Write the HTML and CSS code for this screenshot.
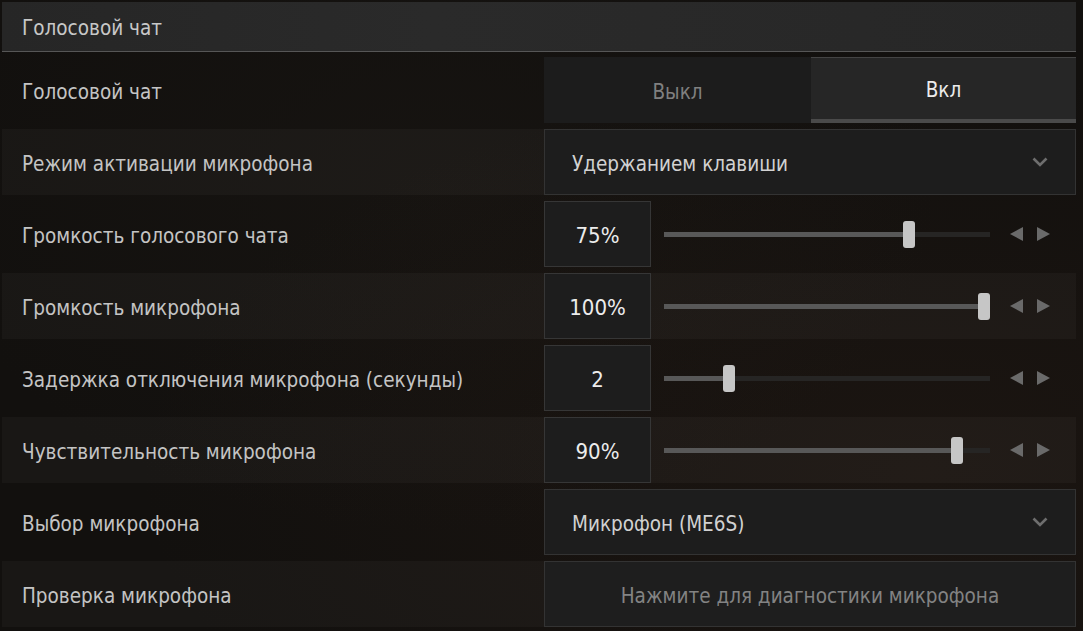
FILE: index.html
```html
<!DOCTYPE html>
<html lang="ru">
<head>
    <meta charset="UTF-8">
    <meta name="viewport" content="width=device-width, initial-scale=1.0">
    <title>Голосовой чат</title>
    <link rel="stylesheet" href="styles.css">
</head>
<body>

    <div class="panel">
        <div class="panel-head">Голосовой чат</div>

        <div class="rows">
            <div class="row">
                <div class="label">Голосовой чат</div>
                <div class="control toggle">
                    <div class="opt">Выкл</div>
                    <div class="opt active">Вкл</div>
                </div>
            </div>

            <div class="row alt">
                <div class="label">Режим активации микрофона</div>
                <div class="control select">
                    <span>Удержанием клавиши</span>
                    <svg class="chevron" width="16" height="10" viewBox="0 0 16 10"><path d="M1.5 1.5 L8 8 L14.5 1.5" fill="none" stroke="#6e6e6e" stroke-width="2.6"/></svg>
                </div>
            </div>

            <div class="row">
                <div class="label">Громкость голосового чата</div>
                <div class="control range">
                    <div class="value">75%</div>
                    <div class="track">
                        <div class="fill" style="width: 75%"></div>
                        <div class="thumb" style="left: 75%"></div>
                    </div>
                    <div class="arrows">
                        <svg width="13" height="14" viewBox="0 0 13 14"><polygon points="13,0 13,14 0,7" fill="#6a6a6a"/></svg>
                        <svg width="13" height="14" viewBox="0 0 13 14"><polygon points="0,0 0,14 13,7" fill="#6a6a6a"/></svg>
                    </div>
                </div>
            </div>

            <div class="row alt">
                <div class="label">Громкость микрофона</div>
                <div class="control range">
                    <div class="value">100%</div>
                    <div class="track">
                        <div class="fill" style="width: 100%"></div>
                        <div class="thumb" style="left: 98.2%"></div>
                    </div>
                    <div class="arrows">
                        <svg width="13" height="14" viewBox="0 0 13 14"><polygon points="13,0 13,14 0,7" fill="#6a6a6a"/></svg>
                        <svg width="13" height="14" viewBox="0 0 13 14"><polygon points="0,0 0,14 13,7" fill="#6a6a6a"/></svg>
                    </div>
                </div>
            </div>

            <div class="row">
                <div class="label">Задержка отключения микрофона (секунды)</div>
                <div class="control range">
                    <div class="value">2</div>
                    <div class="track">
                        <div class="fill" style="width: 20%"></div>
                        <div class="thumb" style="left: 20%"></div>
                    </div>
                    <div class="arrows">
                        <svg width="13" height="14" viewBox="0 0 13 14"><polygon points="13,0 13,14 0,7" fill="#6a6a6a"/></svg>
                        <svg width="13" height="14" viewBox="0 0 13 14"><polygon points="0,0 0,14 13,7" fill="#6a6a6a"/></svg>
                    </div>
                </div>
            </div>

            <div class="row alt">
                <div class="label">Чувствительность микрофона</div>
                <div class="control range">
                    <div class="value">90%</div>
                    <div class="track">
                        <div class="fill" style="width: 90%"></div>
                        <div class="thumb" style="left: 90%"></div>
                    </div>
                    <div class="arrows">
                        <svg width="13" height="14" viewBox="0 0 13 14"><polygon points="13,0 13,14 0,7" fill="#6a6a6a"/></svg>
                        <svg width="13" height="14" viewBox="0 0 13 14"><polygon points="0,0 0,14 13,7" fill="#6a6a6a"/></svg>
                    </div>
                </div>
            </div>

            <div class="row">
                <div class="label">Выбор микрофона</div>
                <div class="control select">
                    <span>Микрофон (ME6S)</span>
                    <svg class="chevron" width="16" height="10" viewBox="0 0 16 10"><path d="M1.5 1.5 L8 8 L14.5 1.5" fill="none" stroke="#6e6e6e" stroke-width="2.6"/></svg>
                </div>
            </div>

            <div class="row alt">
                <div class="label">Проверка микрофона</div>
                <div class="control button">Нажмите для диагностики микрофона</div>
            </div>
        </div>
    </div>

</body>
</html>
```

FILE: styles.css
```css
html, body {
    height: 100%;
}
body {
    margin: 0;
    padding: 2px 7px 0 2px;
    box-sizing: border-box;
    overflow: hidden;
    font-family: "DejaVu Sans", "Liberation Sans", sans-serif;
    font-stretch: condensed;
    font-size: 20.5px;
    color: #c4c4c4;
    background-color: #12100e;
    background-image: radial-gradient(ellipse at 85% 75%, rgba(55, 36, 26, 0.25), transparent 60%),
                      radial-gradient(ellipse at 40% 30%, rgba(40, 34, 28, 0.2), transparent 55%);
}
.panel-head {
    height: 49px;
    line-height: 52px;
    padding-left: 20px;
    background: linear-gradient(90deg, #262626, #2a2a2a 40%, #272727);
    border-bottom: 1px solid #565656;
    color: #c8c8c8;
}
.rows {
    display: flex;
    flex-direction: column;
    gap: 6px;
    padding-top: 5px;
}
.row {
    display: grid;
    grid-template-columns: 542px 1fr;
    height: 66px;
    align-items: center;
}
.row.alt {
    background-color: rgba(255, 255, 255, 0.032);
}
.label {
    padding: 4px 0 0 20px;
    color: #c4c4c4;
}
.control {
    height: 66px;
    box-sizing: border-box;
}

/* on / off switch */
.toggle {
    display: grid;
    grid-template-columns: 267px 1fr;
}
.opt {
    display: flex;
    align-items: center;
    justify-content: center;
    padding-top: 4px;
    background-color: #1c1c1c;
    color: #808080;
}
.opt.active {
    background-color: #262626;
    border-top: 1px solid #444;
    border-bottom: 4px solid #4a4a4a;
    padding-top: 2px;
    color: #ececec;
}

/* dropdowns and button */
.select {
    display: flex;
    align-items: center;
    justify-content: space-between;
    padding: 0 27px 0 27px;
    background-color: #1d1d1d;
    border: 1px solid #333;
    color: #d2d2d2;
}
.select span {
    padding-top: 4px;
}
.chevron {
    display: block;
}
.button {
    display: flex;
    align-items: center;
    justify-content: center;
    padding-top: 4px;
    background-color: #1e1e1e;
    border: 1px solid #333;
    color: #838383;
}

/* sliders */
.range {
    display: flex;
    align-items: center;
}
.value {
    width: 107px;
    height: 66px;
    box-sizing: border-box;
    display: flex;
    align-items: center;
    justify-content: center;
    padding-top: 2px;
    background-color: #1d1d1d;
    border: 1px solid #363636;
    color: #ececec;
    font-size: 22px;
}
.track {
    position: relative;
    width: 326px;
    height: 5px;
    margin-left: 13px;
    background-color: #262524;
}
.fill {
    height: 100%;
    background-color: #585858;
}
.thumb {
    position: absolute;
    top: -11px;
    width: 12px;
    height: 27px;
    transform: translateX(-50%);
    background-color: #c6c6c6;
    border-radius: 3px;
}
.arrows {
    display: flex;
    gap: 14px;
    margin-left: 20px;
}
.arrows svg {
    display: block;
}
```
